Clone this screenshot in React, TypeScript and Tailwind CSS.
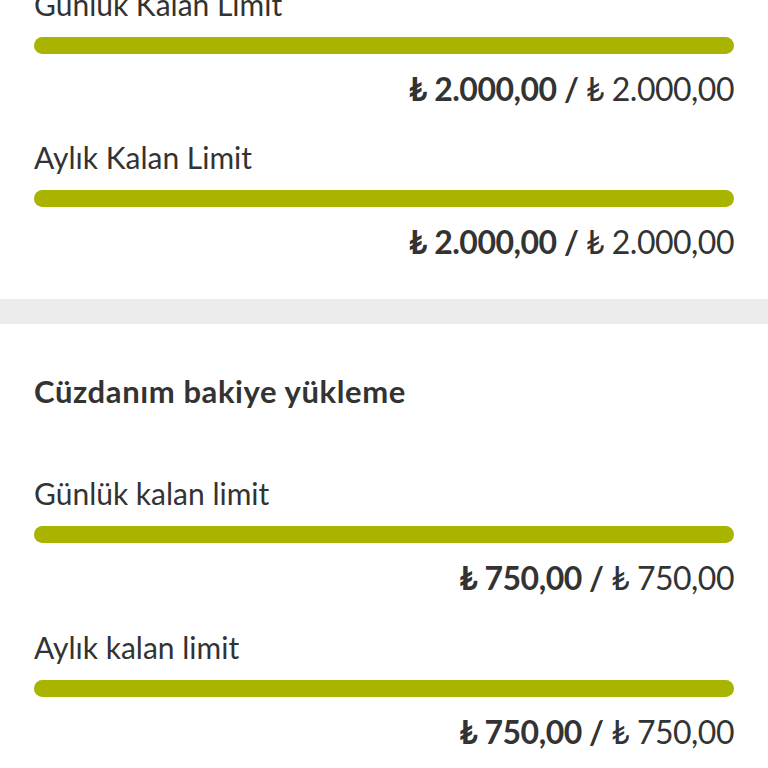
import React from 'react';

type Limit = { label: string; used: number; total: string; current: string };

const walletLimits: Limit[] = [
  { label: 'Günlük Kalan Limit', used: 100, current: '2.000,00', total: '2.000,00' },
  { label: 'Aylık Kalan Limit', used: 100, current: '2.000,00', total: '2.000,00' },
];

const topupLimits: Limit[] = [
  { label: 'Günlük kalan limit', used: 100, current: '750,00', total: '750,00' },
  { label: 'Aylık kalan limit', used: 100, current: '750,00', total: '750,00' },
];

function LimitRow({ item, first, tight }: { item: Limit; first?: boolean; tight?: boolean }) {
  return (
    <div className={first ? '' : tight ? 'mt-[33px]' : 'mt-[32px]'}>
      <p className="text-[30px] leading-[35px] text-[#333333]">{item.label}</p>
      <div className="mt-[15px] h-[17px] w-full rounded-full bg-[#e6e6e6]">
        <div className="h-full rounded-full bg-[#a8b400]" style={{ width: `${item.used}%` }} />
      </div>
      <p className="mt-[16px] text-right text-[32px] leading-[38px] tracking-[-0.5px] text-[#333333]">
        <span className="font-bold">₺ {item.current} /</span>
        <span className="font-normal"> ₺ {item.total}</span>
      </p>
    </div>
  );
}

export default function App() {
  return (
    <div className="min-h-screen bg-white font-['Lato','Noto_Sans',sans-serif] overflow-hidden">
      {/* Cüzdan limitleri */}
      <section className="px-[34px] pb-[38px] -mt-[13px]">
        {walletLimits.map((l, i) => (
          <LimitRow key={l.label} item={l} first={i === 0} />
        ))}
      </section>

      <div className="h-[25px] bg-[#ebebeb]" />

      {/* Bakiye yükleme */}
      <section className="px-[34px] pt-[49px] pb-10">
        <h2 className="text-[31px] leading-[36px] tracking-[0.6px] font-bold text-[#333333]">Cüzdanım bakiye yükleme</h2>
        <div className="mt-[67px]">
          {topupLimits.map((l, i) => (
            <LimitRow key={l.label} item={l} first={i === 0} tight />
          ))}
        </div>
      </section>
    </div>
  );
}
